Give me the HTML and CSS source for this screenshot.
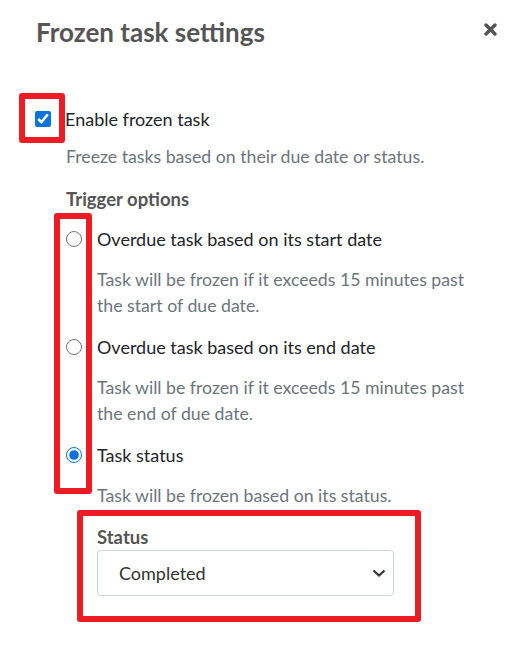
FILE: index.html
```html
<!DOCTYPE html>
<html lang="en">
<head>
<meta charset="utf-8">
<title>Frozen task settings</title>
<link rel="stylesheet" href="styles.css">
</head>
<body>
<div class="modal">
  <div class="modal-header">
    <h2 class="modal-title">Frozen task settings</h2>
    <button class="close" aria-label="Close">
      <svg width="13" height="13" viewBox="0 0 13 13"><path d="M2 2 L11 11 M11 2 L2 11" stroke="#555" stroke-width="3.4" stroke-linecap="round"/></svg>
    </button>
  </div>
  <div class="modal-body">
    <label class="check-row">
      <span class="check-wrap"><input type="checkbox" checked></span>
      <span class="check-label">Enable frozen task</span>
    </label>
    <p class="help indent">Freeze tasks based on their due date or status.</p>
    <div class="indent">
      <div class="group-title">Trigger options</div>
      <div class="options">
        <span class="radio-mark"></span>
        <div class="option">
          <label class="radio-row"><input type="radio" name="trigger"><span>Overdue task based on its start date</span></label>
          <p class="help sub">Task will be frozen if it exceeds 15 minutes past the start of due date.</p>
        </div>
        <div class="option">
          <label class="radio-row"><input type="radio" name="trigger"><span>Overdue task based on its end date</span></label>
          <p class="help sub">Task will be frozen if it exceeds 15 minutes past the end of due date.</p>
        </div>
        <div class="option">
          <label class="radio-row"><input type="radio" name="trigger" checked><span>Task status</span></label>
          <p class="help sub">Task will be frozen based on its status.</p>
        </div>
      </div>
      <div class="status-field">
        <div class="field-label">Status</div>
        <div class="select">
          <span>Completed</span>
          <svg width="14" height="8" viewBox="0 0 14 8"><path d="M1.5 1.5 L7 6.5 L12.5 1.5" fill="none" stroke="#333" stroke-width="2.2"/></svg>
        </div>
      </div>
    </div>
  </div>
</div>
</body>
</html>
```

FILE: styles.css
```css
*, *::before, *::after { box-sizing: border-box; }
html, body { margin: 0; background: #fff; }
body {
  font-family: Lato, "Noto Sans", sans-serif;
  color: #212529;
  width: 525px;
  height: 666px;
  overflow: hidden;
}
.modal {
  padding: 14px 27px 0 36px;
}
.modal-header {
  display: flex;
  justify-content: space-between;
  align-items: center;
  height: 36px;
}
.modal-title {
  margin: 0;
  font-size: 26px;
  font-weight: 700;
  color: #555;
  line-height: 36px;
}
.close {
  border: 0;
  background: none;
  padding: 0;
  width: 13px;
  height: 13px;
  display: flex;
  margin-top: -5px;
  margin-right: 1px;
}
.modal-body {
  padding-top: 56px;
}
.check-row {
  display: flex;
  align-items: center;
  height: 26px;
}
.check-wrap {
  width: 30px;
  display: flex;
  align-items: center;
  position: relative;
  margin-left: -1px;
  padding-right: 1px;
}
.check-wrap input {
  width: 16px;
  height: 16px;
  margin: 0;
  accent-color: #0a74da;
}
.check-wrap::after {
  content: "";
  position: absolute;
  left: -16px;
  top: -18px;
  width: 46px;
  height: 50px;
  border: 6px solid #ed1c24;
  border-radius: 3px;
}
.check-label {
  font-size: 18px;
  line-height: 26px;
}
.help {
  margin: 0;
  font-size: 17.7px;
  line-height: 26px;
  color: #6c757d;
}
.indent {
  margin-left: 30px;
}
p.indent {
  margin-top: 12px;
}
.group-title {
  margin-top: 16px;
  font-size: 18.5px;
  font-weight: 700;
  color: #555;
  line-height: 26px;
}
.options {
  position: relative;
  margin-top: 14px;
}
.radio-mark {
  position: absolute;
  left: -12px;
  top: -13px;
  width: 38px;
  height: 281px;
  border: 6px solid #ed1c24;
  border-radius: 3px;
}
.option + .option {
  margin-top: 15px;
}
.radio-row {
  display: flex;
  align-items: center;
  height: 26px;
  font-size: 18px;
}
.radio-row input {
  width: 16px;
  height: 16px;
  margin: 0 15px 0 0;
  accent-color: #0a74da;
}
.help.sub {
  margin-top: 15px;
  margin-left: 31px;
  max-width: 390px;
}
.status-field {
  position: relative;
  margin-left: 31px;
  padding-top: 16px;
  width: 297px;
}
.status-field::after {
  content: "";
  position: absolute;
  left: -20px;
  top: 1px;
  width: 344px;
  height: 112px;
  border: 6px solid #ed1c24;
  border-radius: 3px;
}
.field-label {
  font-size: 18.5px;
  font-weight: 700;
  color: #555;
  line-height: 24px;
}
.select {
  margin-top: 1px;
  height: 46px;
  border: 1px solid #ced4da;
  border-radius: 4px;
  display: flex;
  align-items: center;
  justify-content: space-between;
  padding: 0 7px 0 21px;
  font-size: 18px;
  color: #333;
}
```
